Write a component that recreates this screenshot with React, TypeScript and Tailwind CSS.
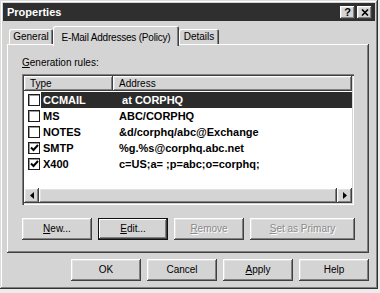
import React from "react";

const raised =
  "shadow-[inset_-1px_-1px_#404040,inset_1px_1px_#ffffff,inset_-2px_-2px_#808080,inset_2px_2px_#e2e2e2]";

type Row = { type: string; address: string; checked: boolean; selected?: boolean };

const rows: Row[] = [
  { type: "CCMAIL", address: " at CORPHQ", checked: false, selected: true },
  { type: "MS", address: "ABC/CORPHQ", checked: false },
  { type: "NOTES", address: "&d/corphq/abc@Exchange", checked: false },
  { type: "SMTP", address: "%g.%s@corphq.abc.net", checked: true },
  { type: "X400", address: "c=US;a= ;p=abc;o=corphq;", checked: true },
];

function Btn({
  children,
  w,
  disabled,
  isDefault,
}: {
  children: React.ReactNode;
  w: string;
  disabled?: boolean;
  isDefault?: boolean;
}) {
  return (
    <button
      type="button"
      className={`${w} h-[22px] flex items-center justify-center bg-[#d4d4d4] text-[10px] leading-none ${
        isDefault
          ? "border border-[#111] shadow-[inset_-1px_-1px_#404040,inset_1px_1px_#ffffff,inset_-2px_-2px_#808080]"
          : raised
      } ${disabled ? "text-[#8a8a8a] [text-shadow:1px_1px_0_#ffffff]" : "text-black"}`}
    >
      {children}
    </button>
  );
}

function CheckBox({ checked }: { checked: boolean }) {
  return (
    <div className="w-[12px] h-[12px] shrink-0 border border-[#1c1c1c] bg-white flex items-center justify-center shadow-[inset_1px_1px_#9a9a9a]">
      {checked && (
        <svg width="9" height="8" viewBox="0 0 9 8">
          <path d="M1 3.5 L3.5 6 L8 1" stroke="#000" strokeWidth="2" fill="none" />
        </svg>
      )}
    </div>
  );
}

function Arrow({ dir }: { dir: "left" | "right" }) {
  return (
    <div className={`w-[15px] h-full shrink-0 bg-[#d4d4d4] flex items-center justify-center ${raised}`}>
      <svg width="4" height="7" viewBox="0 0 4 7">
        {dir === "left" ? <path d="M4 0 L0 3.5 L4 7 Z" fill="#000" /> : <path d="M0 0 L4 3.5 L0 7 Z" fill="#000" />}
      </svg>
    </div>
  );
}

export default function App() {
  return (
    <div className="w-[380px] h-[293px] bg-[#ececec] font-['Liberation_Sans',Arial,sans-serif]">
      <div className="w-[378px] h-[289px] bg-[#d4d4d4] p-[3px] flex flex-col shadow-[inset_-1px_-1px_#303030,inset_1px_1px_#dcdcdc,inset_-2px_-2px_#808080,inset_2px_2px_#ffffff]">
        {/* title bar */}
        <div className="h-[18px] bg-[#2f2f2f] flex items-center pl-[4px] pr-[3px]">
          <span className="text-white font-bold text-[11px] leading-none">Properties</span>
          <div className="ml-auto flex gap-[2px]">
            <div className={`w-[15px] h-[13px] bg-[#d4d4d4] flex items-center justify-center text-[11px] font-bold leading-none text-black ${raised}`}>
              ?
            </div>
            <div className={`w-[15px] h-[13px] bg-[#d4d4d4] flex items-center justify-center ${raised}`}>
              <svg width="8" height="7" viewBox="0 0 8 7">
                <path d="M1 0.5 L7 6.5 M7 0.5 L1 6.5" stroke="#000" strokeWidth="1.6" />
              </svg>
            </div>
          </div>
        </div>

        <div className="pl-[4px] pt-[5px]">
          {/* tabs */}
          <div className="h-[18px] flex items-end pl-[2px] text-[10px] text-black">
            <div className="w-[44px] h-[15px] flex items-center justify-center rounded-t-[2px] shadow-[inset_1px_1px_#ffffff,inset_-1px_0_#404040,inset_-2px_0_#808080]">
              General
            </div>
            <div className="relative z-10 w-[126px] h-[20px] mb-[-2px] bg-[#d4d4d4] flex items-start pt-[4px] justify-center rounded-t-[2px] tracking-[-0.2px] shadow-[inset_1px_1px_#ffffff,inset_-1px_0_#404040,inset_-2px_0_#808080]">
              E-Mail Addresses (Policy)
            </div>
            <div className="w-[40px] h-[15px] flex items-center justify-center rounded-t-[2px] shadow-[inset_1px_1px_#ffffff,inset_-1px_0_#404040,inset_-2px_0_#808080]">
              Details
            </div>
          </div>

          {/* panel */}
          <div className="w-[362px] h-[209px] pt-[12px] pl-[15px] flex flex-col shadow-[inset_-1px_-1px_#404040,inset_1px_1px_#ffffff,inset_-2px_-2px_#808080]">
            <div className="text-[10px] leading-[13px] text-black">
              <span className="underline">G</span>eneration rules:
            </div>

            {/* list */}
            <div className="mt-[5px] w-[332px] h-[131px] bg-white p-[2px] flex flex-col shadow-[inset_1px_1px_#808080,inset_2px_2px_#404040,inset_-1px_-1px_#ffffff,inset_-2px_-2px_#d4d4d4]">
              <div className="h-[15px] flex text-[10px] text-black leading-none">
                <div className={`w-[89px] h-full bg-[#d4d4d4] flex items-center pl-[6px] ${raised}`}>Type</div>
                <div className={`flex-1 h-full bg-[#d4d4d4] flex items-center pl-[6px] ${raised}`}>Address</div>
              </div>
              <div className="pt-[1px] flex flex-col">
                {rows.map((r) => (
                  <div key={r.type} className="h-[16px] flex items-center pl-[4px] text-[11px] font-bold leading-none">
                    <CheckBox checked={r.checked} />
                    <div
                      className={`ml-[1px] flex-1 h-full flex items-center ${
                        r.selected ? "bg-[#2b2b2b] text-white" : "text-black"
                      }`}
                    >
                      <span className="w-[76px] pl-[2px]">{r.type}</span>
                      <span className="pl-[2px] whitespace-pre">{r.address}</span>
                    </div>
                  </div>
                ))}
              </div>
              {/* horizontal scrollbar */}
              <div className="mt-auto h-[15px] flex bg-[#e6e6e6]">
                <Arrow dir="left" />
                <div className={`flex-1 h-full bg-[#d4d4d4] ${raised}`} />
                <Arrow dir="right" />
              </div>
            </div>

            {/* list buttons */}
            <div className="mt-[13px] flex gap-[6px]">
              <Btn w="w-[70px]">
                <span className="underline">N</span>ew...
              </Btn>
              <Btn w="w-[70px]" isDefault>
                <span className="underline">E</span>dit...
              </Btn>
              <Btn w="w-[70px]" disabled>
                <span className="underline">R</span>emove
              </Btn>
              <Btn w="w-[105px]" disabled>
                <span className="underline">S</span>et as Primary
              </Btn>
            </div>
          </div>

          {/* dialog buttons */}
          <div className="w-[362px] mt-[6px] flex justify-end gap-[6px]">
            <Btn w="w-[70px]">OK</Btn>
            <Btn w="w-[70px]">Cancel</Btn>
            <Btn w="w-[70px]">
              <span className="underline">A</span>pply
            </Btn>
            <Btn w="w-[70px]">Help</Btn>
          </div>
        </div>
      </div>
    </div>
  );
}
